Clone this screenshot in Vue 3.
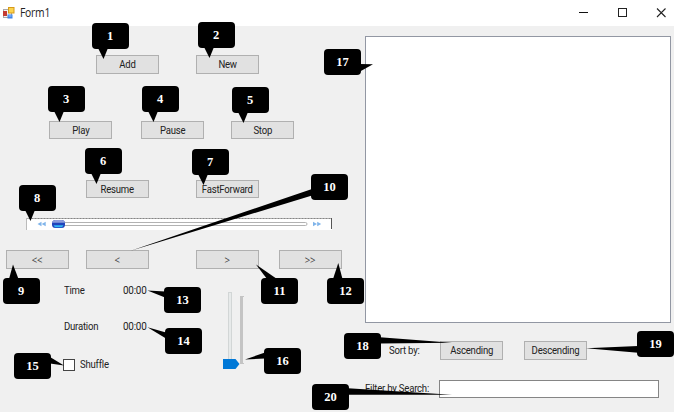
<script setup>
const callouts = [
  { n: 1, x: 92, y: 23, tail: '98,48 108,48 103.5,59' },
  { n: 2, x: 198, y: 22, tail: '204,47 214,47 209.5,58' },
  { n: 3, x: 48, y: 86, tail: '54,111 64,111 59.5,122' },
  { n: 4, x: 142, y: 86, tail: '148,111 158,111 153.5,122' },
  { n: 5, x: 232, y: 87, tail: '238,112 248,112 243.5,123' },
  { n: 6, x: 85, y: 148, tail: '91,173 101,173 96.5,184' },
  { n: 7, x: 192, y: 149, tail: '198,174 208,174 203.5,185' },
  { n: 8, x: 19, y: 185, tail: '25,210 35,210 30.5,221' },
  { n: 9, x: 3, y: 278, tail: '9,279 18.5,279 13,264.5' },
  { n: 10, x: 311, y: 174, tail: '312,189 312,195.5 130,251' },
  { n: 11, x: 261, y: 278, tail: '267,279 277,279 256,264.5' },
  { n: 12, x: 327, y: 278, tail: '333,279 342.5,279 338.3,263' },
  { n: 13, x: 164, y: 287, tail: '165,291.5 165,297.5 147.5,290.5' },
  { n: 14, x: 165, y: 328, tail: '166,332.5 166,338.5 147.5,327.3' },
  { n: 15, x: 14, y: 353, tail: '50,357 50,363.5 64,365.5' },
  { n: 16, x: 264, y: 348, tail: '265,352.5 265,358.5 245,359.5' },
  { n: 17, x: 324, y: 49, tail: '360,64 360,71.5 373,64.3' },
  { n: 18, x: 344, y: 333, tail: '380,337.3 380,343.5 452,342.8' },
  { n: 19, x: 637, y: 331, tail: '638,346 638,352.8 586,348.3' },
  { n: 20, x: 312, y: 384, tail: '348,388.3 348,394.8 452,394.8' },
]
</script>

<template>
  <div class="window">
    <header class="titlebar">
      <svg class="app-icon" width="12" height="12" viewBox="0 0 12 12">
        <rect x="0.5" y="2.5" width="8" height="8" fill="#f4f4f4" stroke="#a9a9a9" />
        <rect x="0" y="4" width="4" height="5" fill="#c43c32" />
        <rect x="5" y="0" width="6.5" height="6.5" fill="#d79a18" />
        <rect x="6" y="1" width="4.5" height="4.5" fill="#fbd34e" />
        <rect x="4.5" y="7.5" width="5" height="4" fill="#3f83e8" />
        <rect x="5.5" y="8.2" width="3" height="1.5" fill="#78b1f8" />
      </svg>
      <span class="title">Form1</span>
      <svg class="controls" width="86" height="14" viewBox="0 0 86 14">
        <path d="M0 6.5H9" stroke="#111" />
        <rect x="39.5" y="2.5" width="8" height="8" fill="none" stroke="#222" />
        <path d="M78 2.5L86.5 11M86.5 2.5L78 11" stroke="#222" stroke-width="1.1" />
      </svg>
    </header>

    <main class="client">
      <section class="player">
        <div class="row add-row">
          <button><span>Add</span></button><button><span>New</span></button>
        </div>
        <div class="row play-row">
          <button><span>Play</span></button><button><span>Pause</span></button><button><span>Stop</span></button>
        </div>
        <div class="row resume-row">
          <button><span>Resume</span></button><button><span>FastForward</span></button>
        </div>
        <div class="seek">
          <svg width="306" height="12" viewBox="0 0 306 12">
            <rect width="306" height="12" fill="#fff" />
            <path d="M0 .5H306" stroke="#aaa" />
            <path d="M0 .5H306" stroke="#858585" stroke-dasharray="1 2" />
            <path d="M.5 0V12" stroke="#bbb" />
            <path d="M305.5 0V11" stroke="#555" />
            <path d="M15.5 3.8V8.2L11.5 6ZM19.7 3.8V8.2L15.7 6Z" fill="#7fb4ea" />
            <path d="M287 3.8V8.2L291 6ZM291.2 3.8V8.2L295.2 6Z" fill="#7fb4ea" />
            <rect x="30" y="4.5" width="251" height="3" rx="1.5" fill="#fff" stroke="#b2b2b2" />
            <rect x="26" y="2" width="13" height="8" rx="3.5" fill="#1f43bb" />
            <path d="M29 2H36Q38.5 2.2 39 4.8H26Q26.5 2.2 29 2Z" fill="#8d9cdb" />
            <path d="M27.5 7.2H37.5L36 9.2H29Z" fill="#35b7f5" />
          </svg>
        </div>
        <div class="row nav-row">
          <button><span>&lt;&lt;</span></button><button><span>&lt;</span></button><button><span>&gt;</span></button><button><span>&gt;&gt;</span></button>
        </div>
        <div class="status">
          <div class="info">
            <div class="line"><span class="key">Time</span><span>00:00</span></div>
            <div class="line"><span class="key">Duration</span><span>00:00</span></div>
            <div class="line check"><i class="box"></i><span>Shuffle</span></div>
          </div>
          <svg class="volume" width="22" height="80" viewBox="0 0 22 80">
            <rect x="5.5" y="1.5" width="3" height="70" fill="#e7eaea" stroke="#d2d6d6" />
            <rect x="17" y="5" width="3" height="68" fill="#c4c4c4" />
            <path d="M17 5.5H21M17 72.5H21" stroke="#c4c4c4" />
            <path d="M0 68H12.5L16.5 73L12.5 78H0Z" fill="#0078d7" />
          </svg>
        </div>
      </section>

      <section class="library">
        <div class="list"></div>
        <div class="sort">
          <span class="sort-label">Sort by:</span>
          <button><span>Ascending</span></button><button><span>Descending</span></button>
        </div>
        <div class="filter">
          <span class="filter-label">Filter by Search:</span>
          <input type="text" />
        </div>
      </section>
    </main>

    <svg class="callouts" width="674" height="412" viewBox="0 0 674 412">
      <g v-for="c in callouts" :key="c.n">
        <polygon :points="c.tail" />
        <rect :x="c.x" :y="c.y" width="37" height="26" rx="4" />
        <text :x="c.x + (c.n < 10 ? 18 : 18.5)" :y="c.y + 17">{{ c.n }}</text>
      </g>
    </svg>
  </div>
</template>

<style>
body { margin: 0; overflow: hidden; }
</style>

<style scoped>
* { box-sizing: border-box; }
.window {
  position: relative;
  width: 674px;
  height: 412px;
  background: #f0f0f0;
  color: #222;
  font: 11px/14px Roboto, "Liberation Sans", sans-serif;
  overflow: hidden;
}
.titlebar {
  display: flex;
  align-items: center;
  height: 26px;
  padding: 0 8px 0 3px;
  background: #fff;
}
.window span { white-space: nowrap; letter-spacing: -0.25px; transform: scaleX(.87); }
.window .title { margin-left: 5px; font: 12px/16px "Open Sans", sans-serif; transform: scaleX(.86); transform-origin: left; }
.controls { margin-left: auto; margin-right: 1px; overflow: visible; }
.client { display: flex; height: 386px; }
.player { width: 365px; padding-top: 29px; }
.row { display: flex; height: 19px; }
button {
  display: flex;
  flex: none;
  align-items: center;
  justify-content: center;
  width: 63px;
  height: 19px;
  padding: 1px 0 0;
  border: 1px solid #b0b0b0;
  border-radius: 0;
  background: #e1e1e1;
  color: #222;
  font: inherit;
}
.add-row { padding-left: 96px; gap: 37px; }
.play-row { margin-top: 47px; padding-left: 49px; gap: 29px; }
.play-row button:last-child { margin-left: -2px; }
.play-row button, .resume-row button { height: 18px; }
.resume-row { margin-top: 40px; padding-left: 86px; gap: 47px; }
.seek { height: 12px; margin: 19px 0 0 26px; }
.seek svg { display: block; }
.nav-row { margin-top: 20px; padding-left: 6px; gap: 17px; }
.nav-row button:nth-child(3) { margin-left: 30px; }
.nav-row button:nth-child(4) { margin-left: 3px; }
.window .nav-row span { font-family: "Open Sans", sans-serif; color: #444; }
.status { display: flex; margin-top: 15px; padding-left: 64px; }
.info { width: 159px; }
.line { display: flex; height: 14px; margin-bottom: 22px; }
.line span, .sort-label, .filter-label { transform-origin: left; }
.line .key { width: 58.5px; }
.line .key + span { transform: scaleX(.9); }
.line.check { align-items: center; margin-top: 24px; }
.box { width: 12px; height: 12px; margin: 0 5px 0 -1px; border: 1px solid #444; background: #fff; }
.volume { margin-top: 7px; }
.library { width: 309px; padding-top: 10px; }
.list { width: 306px; height: 287px; border: 1px solid #9297a3; background: #fff; }
.sort { display: flex; align-items: center; height: 19px; margin-top: 18px; padding-left: 24px; }
.sort-label { width: 51px; }
.sort button + button { margin-left: 21px; }
.filter { display: flex; align-items: center; height: 18px; margin-top: 20px; }
.filter-label { flex: none; width: 74px; }
input { width: 220px; height: 18px; padding: 0 3px; border: 1px solid #858585; border-radius: 0; background: #fff; font: inherit; }
.callouts { position: absolute; left: 0; top: 0; pointer-events: none; }
.callouts text {
  fill: #fff;
  font: bold 12.5px "Liberation Serif", serif;
  text-anchor: middle;
}
</style>
